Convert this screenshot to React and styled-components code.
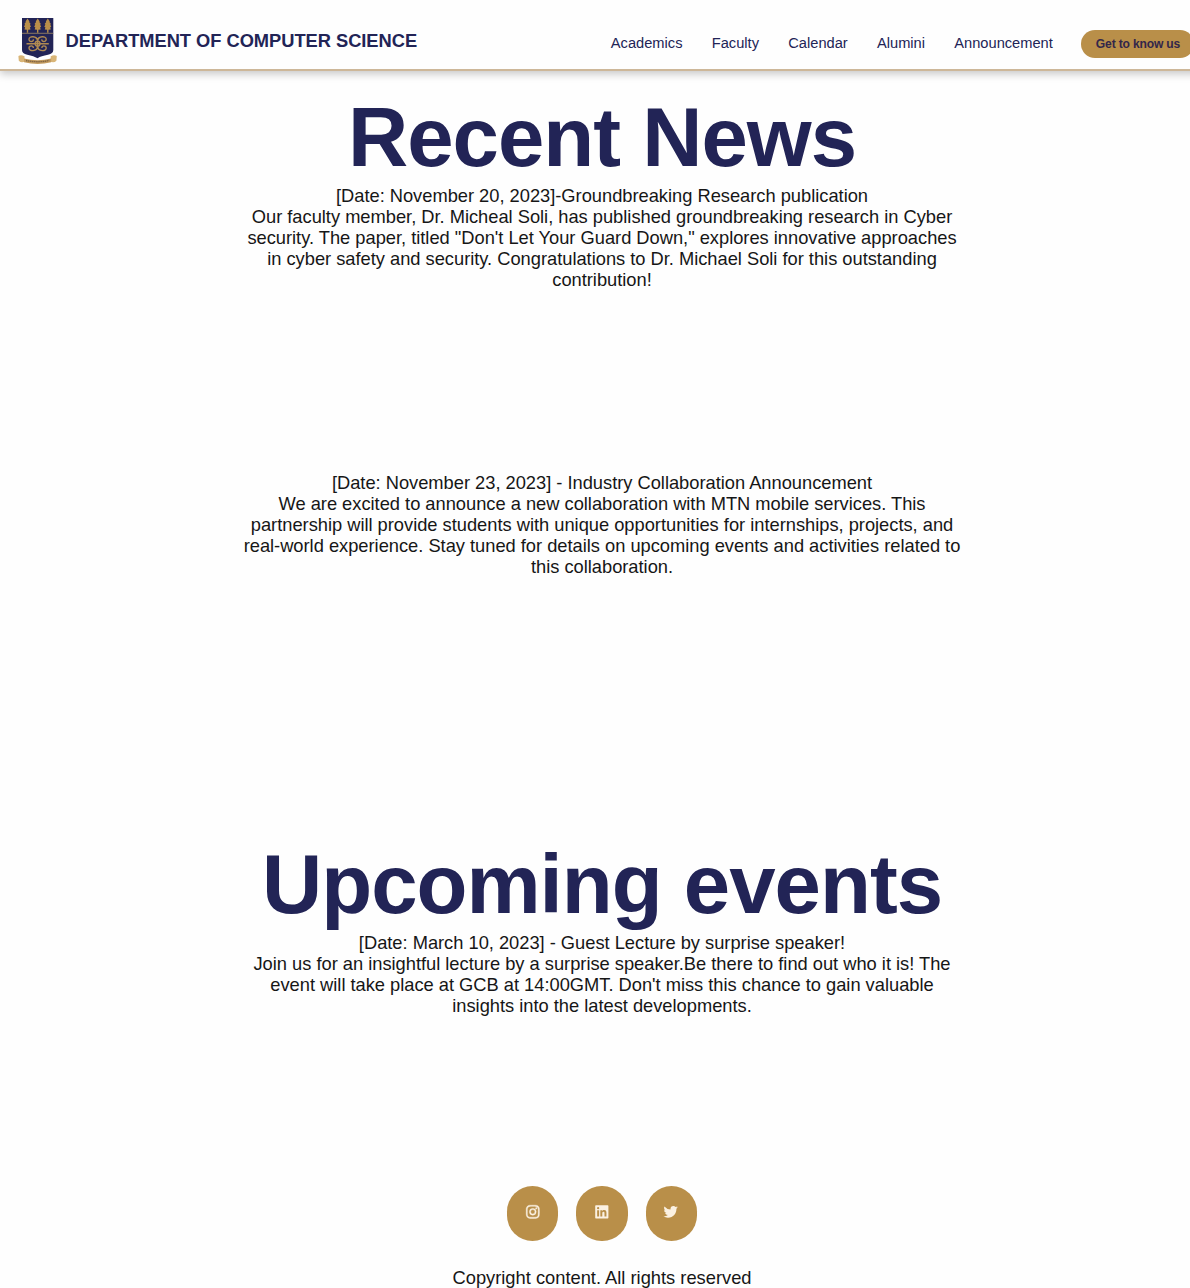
import React from "react";
import styled, { createGlobalStyle } from "styled-components";
import { BiLogoInstagram, BiLogoLinkedinSquare, BiLogoTwitter } from "react-icons/bi";

const navy = "#222456";
const gold = "#b98f49";

const GlobalStyle = createGlobalStyle`
  * { box-sizing: border-box; margin: 0; padding: 0; }
  html, body { background: #fefefe; overflow: hidden; }
  body { font-family: "Liberation Sans", Arial, sans-serif; }
`;

const Page = styled.div`
  width: 1204px;
  height: 1288px;
  overflow: hidden;
  display: flex;
  flex-direction: column;
`;

const Header = styled.header`
  flex: none;
  width: 100%;
  height: 71px;
  display: flex;
  justify-content: space-between;
  padding: 0 10px 0 18px;
  border-bottom: 2px solid #cdb799;
  box-shadow: 0 3px 8px rgba(0, 0, 0, 0.22);
`;

const Brand = styled.div`
  display: flex;
  align-items: flex-start;
  padding-top: 17px;
  gap: 7.6px;
`;

const Crest = styled.svg`
  width: 40px;
  height: 48px;
  display: block;
`;

const BrandName = styled.span`
  padding-top: 13px;
  font-size: 18.3px;
  line-height: 21px;
  letter-spacing: -0.02px;
  font-weight: 700;
  color: ${navy};
  white-space: nowrap;
`;

const Nav = styled.nav`
  display: flex;
  align-items: flex-start;
  padding-top: 30px;
  gap: 29.3px;
`;

const NavLink = styled.a`
  padding-top: 5px;
  font-size: 14.65px;
  line-height: 17px;
  color: ${navy};
  white-space: nowrap;
`;

const NavButton = styled.button`
  width: 113px;
  height: 28px;
  margin-left: -1.1px;
  padding-left: 1px;
  border: 0;
  border-radius: 14px;
  background: ${gold};
  color: #33264a;
  font: 700 12.1px/28px "Liberation Sans", Arial, sans-serif;
  letter-spacing: -0.17px;
  white-space: nowrap;
`;

const Section = styled.section`
  flex: none;
  height: ${(p) => p.$height}px;
  padding-top: ${(p) => p.$top || 0}px;
  text-align: center;
`;

const Title = styled.h1`
  margin-bottom: -1px;
  font-size: 83.4px;
  line-height: 96px;
  letter-spacing: -1px;
  font-weight: 700;
  color: ${navy};
`;

const Story = styled.p`
  height: ${(p) => p.$height}px;
  font-size: 18.31px;
  line-height: 21.04px;
  letter-spacing: -0.015px;
  color: #161616;
`;

const Line = styled.span`
  display: block;
  white-space: nowrap;
`;

const Footer = styled.footer`
  flex: none;
  display: flex;
  flex-direction: column;
  align-items: center;
  gap: 26px;
`;

const Socials = styled.div`
  display: flex;
  gap: 18px;
`;

const Social = styled.a`
  width: 51.3px;
  height: 55px;
  display: flex;
  justify-content: center;
  padding-top: 17px;
  border-radius: 25.65px;
  background: ${gold};
  color: #fbf1e2;
  font-size: 17.6px;

  svg {
    stroke: #fbf1e2;
    stroke-width: ${(p) => p.$weight || 0};
  }
`;

const Copyright = styled.p`
  font-size: 18.31px;
  line-height: 21px;
  color: #161616;
`;

const Leaf = ({ x }) => (
  <g transform={`translate(${x} 0)`} fill="#b98f49">
    <path d="M0 1.6 L2 4.4 L1.6 5 L3.2 7 L2.4 7.6 L3.5 9.8 L2.4 10.3 L3 12.4 L.7 12.8 V15.8 H-.7 V12.8 L-3 12.4 L-2.4 10.3 L-3.5 9.8 L-2.4 7.6 L-3.2 7 L-1.6 5 L-2 4.4Z" />
  </g>
);

const CrestLogo = () => (
  <Crest viewBox="0 0 40 48" aria-label="University crest">
    <path d="M4 1H35.3V33Q35.3 36.6 30 37.8Q23 39 19.6 41.2Q16 39 9.3 37.8Q4 36.6 4 33Z" fill="#222456" />
    <Leaf x={9.5} />
    <Leaf x={19.7} />
    <Leaf x={29.8} />
    <path d="M4 16.3H35.3" stroke="#a58a63" strokeWidth=".8" />
    <g fill="none" stroke="#b08a52" strokeWidth="1.4">
      <path d="M8.5 26.7H30.8M19.6 22V31.5" />
      <path d="M19.6 23.5C19 19 11 18.5 11 22.3C11 25.4 15.8 25.2 15.3 22.4M19.6 23.5C20.2 19 28.2 18.5 28.2 22.3C28.2 25.4 23.4 25.2 23.9 22.4" />
      <path d="M19.6 29.9C19 34.4 11 34.9 11 31.1C11 28 15.8 28.2 15.3 31M19.6 29.9C20.2 34.4 28.2 34.9 28.2 31.1C28.2 28 23.4 28.2 23.9 31" />
      <circle cx="19.6" cy="26.7" r="2.4" />
    </g>
    <path d="M.4 39Q3 37.6 6.5 39.3V44.8Q3 46 .8 43.7Z M38.8 39Q36.2 37.6 32.7 39.3V44.8Q36.2 46 38.4 43.7Z" fill="#d9b577" />
    <path d="M6 41.5Q19.6 44.8 33.2 41.5V45.3Q19.6 48.5 6 45.3Z" fill="#c49c60" />
    <path d="M8 43.5Q19.6 46 31.2 43.5" fill="none" stroke="#806544" strokeWidth="1.3" strokeDasharray="1.4 .5" />
  </Crest>
);

const stories = {
  research: [
    "[Date: November 20, 2023]-Groundbreaking Research publication",
    "Our faculty member, Dr. Micheal Soli, has published groundbreaking research in Cyber",
    "security. The paper, titled \"Don't Let Your Guard Down,\" explores innovative approaches",
    "in cyber safety and security. Congratulations to Dr. Michael Soli for this outstanding",
    "contribution!",
  ],
  industry: [
    "[Date: November 23, 2023] - Industry Collaboration Announcement",
    "We are excited to announce a new collaboration with MTN mobile services. This",
    "partnership will provide students with unique opportunities for internships, projects, and",
    "real-world experience. Stay tuned for details on upcoming events and activities related to",
    "this collaboration.",
  ],
  lecture: [
    "[Date: March 10, 2023] - Guest Lecture by surprise speaker!",
    "Join us for an insightful lecture by a surprise speaker.Be there to find out who it is! The",
    "event will take place at GCB at 14:00GMT. Don't miss this chance to gain valuable",
    "insights into the latest developments.",
  ],
};

const Article = ({ lines, height }) => (
  <Story $height={height}>
    {lines.map((line) => (
      <Line key={line}>{line}</Line>
    ))}
  </Story>
);

export default function App() {
  return (
    <>
      <GlobalStyle />
      <Page>
        <Header>
          <Brand>
            <CrestLogo />
            <BrandName>DEPARTMENT OF COMPUTER SCIENCE</BrandName>
          </Brand>
          <Nav>
            {["Academics", "Faculty", "Calendar", "Alumini", "Announcement"].map((item) => (
              <NavLink key={item}>{item}</NavLink>
            ))}
            <NavButton>Get to know us</NavButton>
          </Nav>
        </Header>
        <Section $height={766} $top={18.5}>
          <Title>Recent News</Title>
          <Article lines={stories.research} height={287.5} />
          <Article lines={stories.industry} height={106} />
        </Section>
        <Section $height={349}>
          <Title>Upcoming events</Title>
          <Article lines={stories.lecture} height={85} />
        </Section>
        <Footer>
          <Socials>
            <Social aria-label="Instagram" $weight={0.6}><BiLogoInstagram /></Social>
            <Social aria-label="LinkedIn"><BiLogoLinkedinSquare /></Social>
            <Social aria-label="Twitter"><BiLogoTwitter /></Social>
          </Socials>
          <Copyright>Copyright content. All rights reserved</Copyright>
        </Footer>
      </Page>
    </>
  );
}
